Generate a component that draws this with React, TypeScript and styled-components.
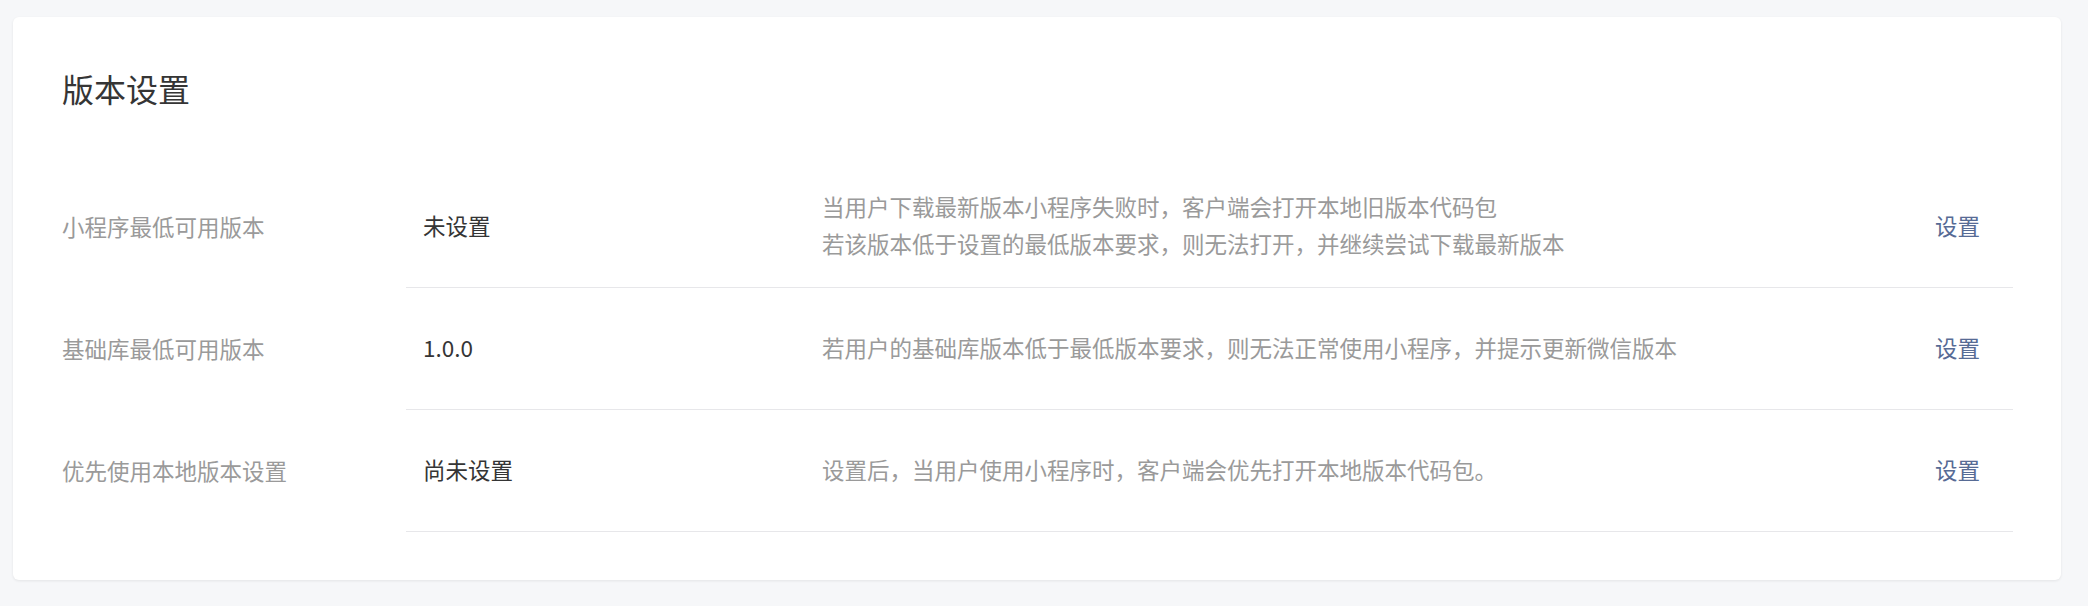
import React from "react";
import styled, { createGlobalStyle } from "styled-components";

const GlobalStyle = createGlobalStyle`
  html, body {
    margin: 0;
    padding: 0;
    background: #f6f7f9;
  }
  body {
    font-family: "Noto Sans CJK SC", "Noto Sans", "Liberation Sans", sans-serif;
    -webkit-font-smoothing: antialiased;
  }
`;

const Page = styled.div`
  padding: 17px 27px 26px 13px;
  background: #f6f7f9;
`;

const Card = styled.section`
  background: #ffffff;
  border-radius: 6px;
  box-shadow: 0 1px 3px rgba(0, 0, 0, 0.08);
  padding: 47px 48px 48px 49px;
`;

const Title = styled.h2`
  margin: 0 0 54px;
  font-size: 32px;
  line-height: 48px;
  font-weight: 400;
  color: #353535;
`;

const List = styled.div`
  display: flex;
  flex-direction: column;
`;

const Row = styled.div`
  display: flex;
  align-items: stretch;
`;

const Label = styled.div`
  width: 344px;
  flex: none;
  display: flex;
  align-items: center;
  padding-bottom: 3px;
  font-size: 22.5px;
  color: #9a9a9a;
`;

const Body = styled.div`
  flex: 1;
  display: flex;
  align-items: center;
  height: 118px;
  padding: 0 33px 3px 17px;
  border-bottom: 1px solid #e7e7ea;
`;

const Value = styled.div`
  width: 399px;
  flex: none;
  font-size: 22.5px;
  color: #353535;
`;

const Desc = styled.div`
  flex: 1;
  font-size: 22.5px;
  line-height: 37px;
  color: #9a9a9a;
`;

const Link = styled.a`
  font-size: 22.5px;
  color: #576b95;
  text-decoration: none;
  cursor: pointer;
`;

type Item = { label: string; value: string; desc: string[] };

const items: Item[] = [
  {
    label: "小程序最低可用版本",
    value: "未设置",
    desc: [
      "当用户下载最新版本小程序失败时，客户端会打开本地旧版本代码包",
      "若该版本低于设置的最低版本要求，则无法打开，并继续尝试下载最新版本",
    ],
  },
  {
    label: "基础库最低可用版本",
    value: "1.0.0",
    desc: ["若用户的基础库版本低于最低版本要求，则无法正常使用小程序，并提示更新微信版本"],
  },
  {
    label: "优先使用本地版本设置",
    value: "尚未设置",
    desc: ["设置后，当用户使用小程序时，客户端会优先打开本地版本代码包。"],
  },
];

export default function App() {
  return (
    <>
      <GlobalStyle />
      <Page>
        <Card>
          <Title>版本设置</Title>
          <List>
            {items.map((it) => (
              <Row key={it.label}>
                <Label>{it.label}</Label>
                <Body>
                  <Value>{it.value}</Value>
                  <Desc>
                    {it.desc.map((d) => (
                      <div key={d}>{d}</div>
                    ))}
                  </Desc>
                  <Link>设置</Link>
                </Body>
              </Row>
            ))}
          </List>
        </Card>
      </Page>
    </>
  );
}
